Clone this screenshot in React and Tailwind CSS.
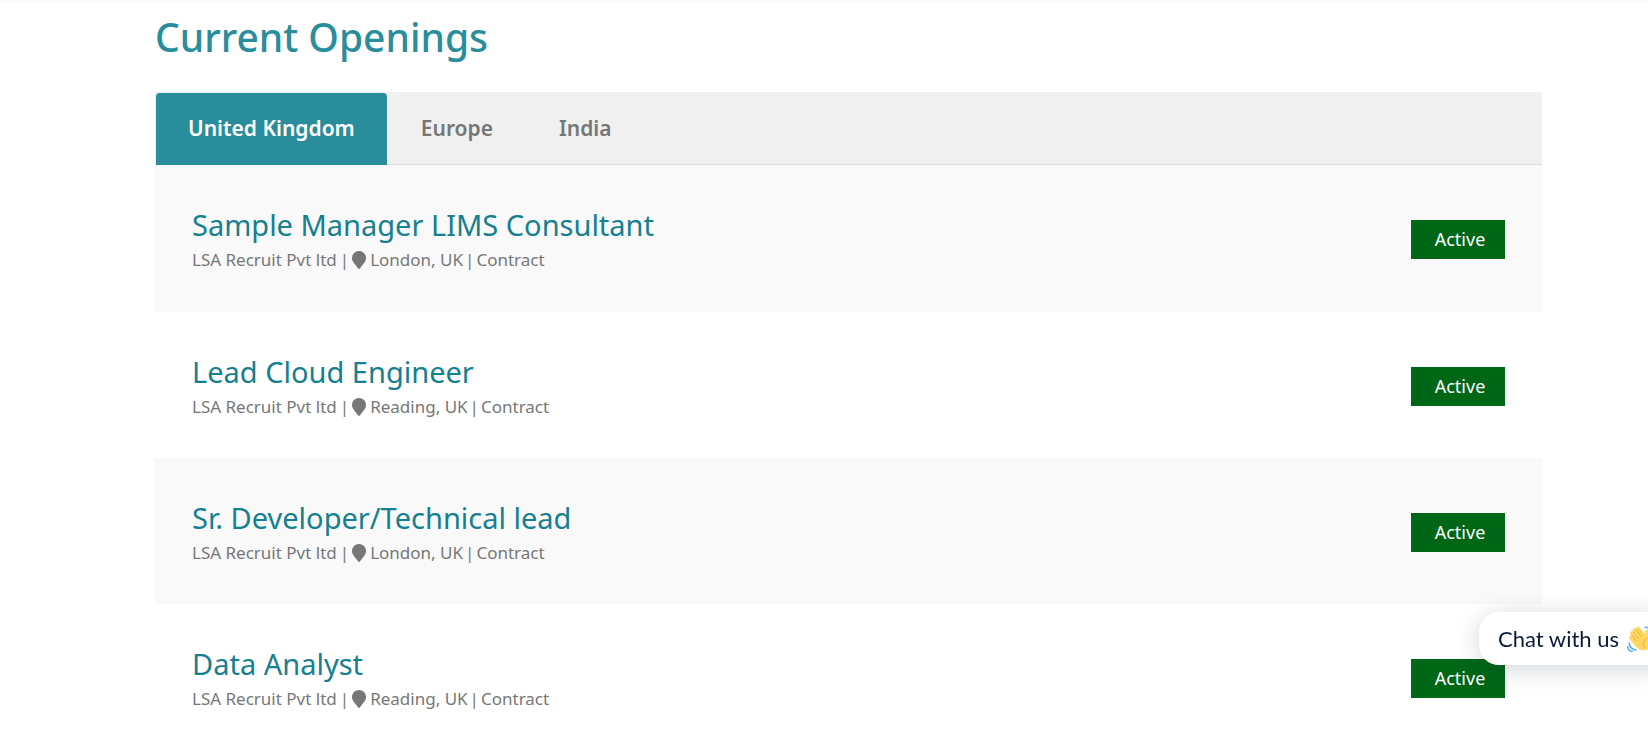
import React, { useState } from "react";

const countries = ["United Kingdom", "Europe", "India"];

const openings = [
  { title: "Sample Manager LIMS Consultant", location: "London, UK" },
  { title: "Lead Cloud Engineer", location: "Reading, UK" },
  { title: "Sr. Developer/Technical lead", location: "London, UK" },
  { title: "Data Analyst", location: "Reading, UK" },
];

function MarkerIcon() {
  return (
    <svg viewBox="0 0 14 18" className="w-3.5 h-[18px] mr-1" fill="currentColor" aria-hidden="true">
      <path d="M7 0C3.100 0 0 3.100 0 7c0 2.200.7 3.200 2.300 5.400L6.200 17.600c.4.5 1.200.5 1.600 0l3.900-5.200C13.300 10.200 14 9.200 14 7c0-3.900-3.100-7-7-7z" />
    </svg>
  );
}

function WaveIcon() {
  return (
    <svg viewBox="0 0 36 36" className="w-[27px] h-[27px] shrink-0" aria-hidden="true">
      {/* hand */}
      <g stroke="#FFD75E" strokeLinecap="round" strokeWidth="4.600" fill="none">
        <path d="M5 16.500L13 27" />
        <path d="M6.500 10.500L17 24" />
        <path d="M10 6.500L20 20" />
        <path d="M15 4.500L24 17" />
        <path d="M26.300 9L28.500 17" />
      </g>
      <path
        fill="#FFD75E"
        d="M8 19L22 10l5 5 3-2c.7 2 1.400 3.500 2 5 2.200 5 .6 10.500-4 13.700-5.200 3.500-11.500 2.300-15-2.500z"
      />
      {/* finger creases */}
      <g stroke="#EDA23F" strokeLinecap="round" strokeWidth="1.100" fill="none">
        <path d="M5.700 12.500L11.800 20.800" />
        <path d="M8.500 9L15.300 18.400" />
        <path d="M12.600 6L19 15.500" />
        <path d="M26.500 17.500c-4.600 2.600-5.600 7.600-3.300 12" />
      </g>
      {/* motion lines */}
      <path
        fill="#5DADEC"
        d="M12 32.042C8 32.042 3.958 28 3.958 24c0-.553-.405-1-.958-1s-1.042.447-1.042 1C1.958 30 6 34.042 12 34.042c.553 0 1-.489 1-1.042s-.447-.958-1-.958z M7 34c-3 0-5-2-5-5 0-.553-.447-1-1-1s-1 .447-1 1c0 4 3 7 7 7 .553 0 1-.447 1-1s-.447-1-1-1z M24 2c-.552 0-1 .448-1 1s.448 1 1 1c4 0 8 3.589 8 8 0 .552.448 1 1 1s1-.448 1-1c0-5.514-4-10-10-10z M29 .042c-.552 0-1 .406-1 .958s.448 1.042 1 1.042c3 0 4.958 2.225 4.958 4.958 0 .552.489 1 1.042 1s.958-.448.958-1C35.958 3.163 33 .042 29 .042z"
      />
    </svg>
  );
}

function Opening({ opening }) {
  return (
    <li className="flex items-start justify-between px-[37px] pt-[43px] pb-[33px] first:pb-[34px] odd:bg-[#f9f9f9]">
      <div>
        <h3 className="text-[29px] leading-[34px] text-[#15808f]">
          <a href="#opening">{opening.title}</a>
        </h3>
        <p className="flex items-center text-[17px] leading-9 text-[#777777]">
          <span>LSA Recruit Pvt ltd</span>
          <span className="px-[3px]">|</span>
          <MarkerIcon />
          <span>{opening.location}</span>
          <span className="px-0.5">|</span>
          <span>Contract</span>
        </p>
      </div>
      <button className="mt-3 h-[39px] w-[94px] pl-1 pb-0.5 bg-[#006717] text-white text-[18px] leading-6">
        Active
      </button>
    </li>
  );
}

function App() {
  const [country, setCountry] = useState("United Kingdom");

  return (
    <div className="bg-white overflow-hidden font-['Noto_Sans',sans-serif]">
      <div className="h-[3px] bg-gradient-to-b from-[#f7f7f7] to-white" />
      <main className="ml-[155px] mr-[106px]">
        <h1 className="pt-[7px] pb-7 text-[39px] leading-[54px] font-medium text-[#2a8d9c]">
          Current Openings
        </h1>

        <div className="flex h-[73px] bg-[#f0f0f0] border-b border-[#dddddd]">
          {countries.map((name) => (
            <button
              key={name}
              onClick={() => setCountry(name)}
              className={
                name === country
                  ? "-mb-px mt-px mx-px px-8 pb-0.5 rounded-t bg-[#2a8d9c] text-white text-[21px] leading-8 font-semibold"
                  : "px-[33px] pb-px text-[#777777] text-[21px] leading-8 font-semibold"
              }
            >
              {name}
            </button>
          ))}
        </div>

        <ul>
          {openings.map((opening) => (
            <Opening key={opening.title} opening={opening} />
          ))}
        </ul>
      </main>

      {/* Chat bubble */}
      <button className="fixed top-[612px] -right-[22px] h-[53px] pl-[19px] pr-4 flex items-center gap-2 rounded-[20px] bg-white text-[#0b1a3a] text-[22px] leading-8 whitespace-nowrap shadow-[0_4px_24px_rgba(6,24,51,0.18)] font-['Lato',sans-serif]">
        Chat with us
        <WaveIcon />
      </button>
    </div>
  );
}

export default App;
